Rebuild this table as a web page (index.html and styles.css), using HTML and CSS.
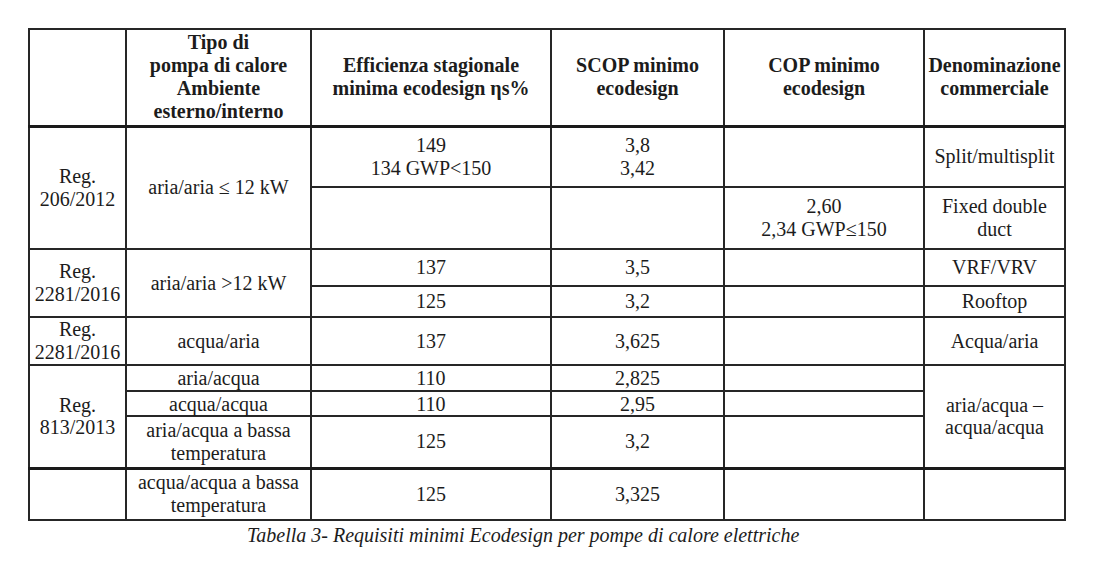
FILE: index.html
```html
<!DOCTYPE html>
<html lang="it">
<head>
<meta charset="utf-8">
<title>Tabella 3</title>
<link rel="stylesheet" href="styles.css">
</head>
<body>
<div class="page">
  <table class="eco">
    <colgroup>
      <col class="c1"><col class="c2"><col class="c3"><col class="c4"><col class="c5"><col class="c6">
    </colgroup>
    <thead>
      <tr class="h">
        <th></th>
        <th>Tipo di<br>pompa di calore<br>Ambiente<br>esterno/interno</th>
        <th>Efficienza stagionale<br>minima ecodesign ηs%</th>
        <th>SCOP minimo<br>ecodesign</th>
        <th>COP minimo<br>ecodesign</th>
        <th>Denominazione<br>commerciale</th>
      </tr>
    </thead>
    <tbody>
      <tr class="r1a">
        <td rowspan="2">Reg.<br>206/2012</td>
        <td rowspan="2">aria/aria ≤ 12 kW</td>
        <td>149<br>134 GWP&lt;150</td>
        <td>3,8<br>3,42</td>
        <td></td>
        <td>Split/multisplit</td>
      </tr>
      <tr class="r1b">
        <td></td>
        <td></td>
        <td>2,60<br>2,34 GWP≤150</td>
        <td>Fixed double<br>duct</td>
      </tr>
      <tr class="r2a">
        <td rowspan="2">Reg.<br>2281/2016</td>
        <td rowspan="2">aria/aria &gt;12 kW</td>
        <td>137</td>
        <td>3,5</td>
        <td></td>
        <td>VRF/VRV</td>
      </tr>
      <tr class="r2b">
        <td>125</td>
        <td>3,2</td>
        <td></td>
        <td>Rooftop</td>
      </tr>
      <tr class="r3">
        <td>Reg.<br>2281/2016</td>
        <td>acqua/aria</td>
        <td>137</td>
        <td>3,625</td>
        <td></td>
        <td>Acqua/aria</td>
      </tr>
      <tr class="r4a">
        <td rowspan="3">Reg.<br>813/2013</td>
        <td>aria/acqua</td>
        <td>110</td>
        <td>2,825</td>
        <td></td>
        <td rowspan="3">aria/acqua –<br>acqua/acqua</td>
      </tr>
      <tr class="r4b">
        <td>acqua/acqua</td>
        <td>110</td>
        <td>2,95</td>
        <td></td>
      </tr>
      <tr class="r4c">
        <td>aria/acqua a bassa<br>temperatura</td>
        <td>125</td>
        <td class="shift">3,2</td>
        <td></td>
      </tr>
      <tr class="r5">
        <td></td>
        <td>acqua/acqua a bassa<br>temperatura</td>
        <td>125</td>
        <td>3,325</td>
        <td></td>
        <td></td>
      </tr>
    </tbody>
  </table>
  <p class="caption">Tabella 3- Requisiti minimi Ecodesign per pompe di calore elettriche</p>
</div>
</body>
</html>
```

FILE: styles.css
```css
html, body {
  margin: 0;
  padding: 0;
  background: #ffffff;
}

.page {
  padding: 28px 0 0 28px;
  font-family: "Liberation Serif", "Times New Roman", serif;
  color: #1c1c1c;
}

.eco {
  border-collapse: collapse;
  table-layout: fixed;
  width: 1036px;
  font-size: 20px;
  line-height: 23px;
}

.c1 { width: 97px; }
.c2 { width: 185px; }
.c3 { width: 240px; }
.c4 { width: 173px; }
.c5 { width: 200px; }
.c6 { width: 141px; }

.eco th,
.eco td {
  border: 2px solid #262626;
  padding: 0 2px;
  text-align: center;
  vertical-align: middle;
  overflow: visible;
  white-space: nowrap;
}

.eco th {
  font-weight: bold;
}

.eco thead th {
  border-bottom: 3px solid #1a1a1a;
}

.h { height: 97px; }
.r1a { height: 61px; }
.r1b { height: 62px; }
.r2a { height: 37px; }
.r2b { height: 31px; }
.r3 { height: 46px; }
.r4a { height: 26px; }
.r4b { height: 25px; }
.r4c { height: 52px; }
.r5 { height: 52px; }

.r4a td,
.r4b td {
  line-height: 22px;
}

.r5 td {
  border-top: 3px solid #1a1a1a;
}

.shift {
  padding-left: 14px;
}

.caption {
  margin: 3px 0 0 219px;
  font-style: italic;
  font-size: 20px;
  line-height: 23px;
  color: #1c1c1c;
}
```
